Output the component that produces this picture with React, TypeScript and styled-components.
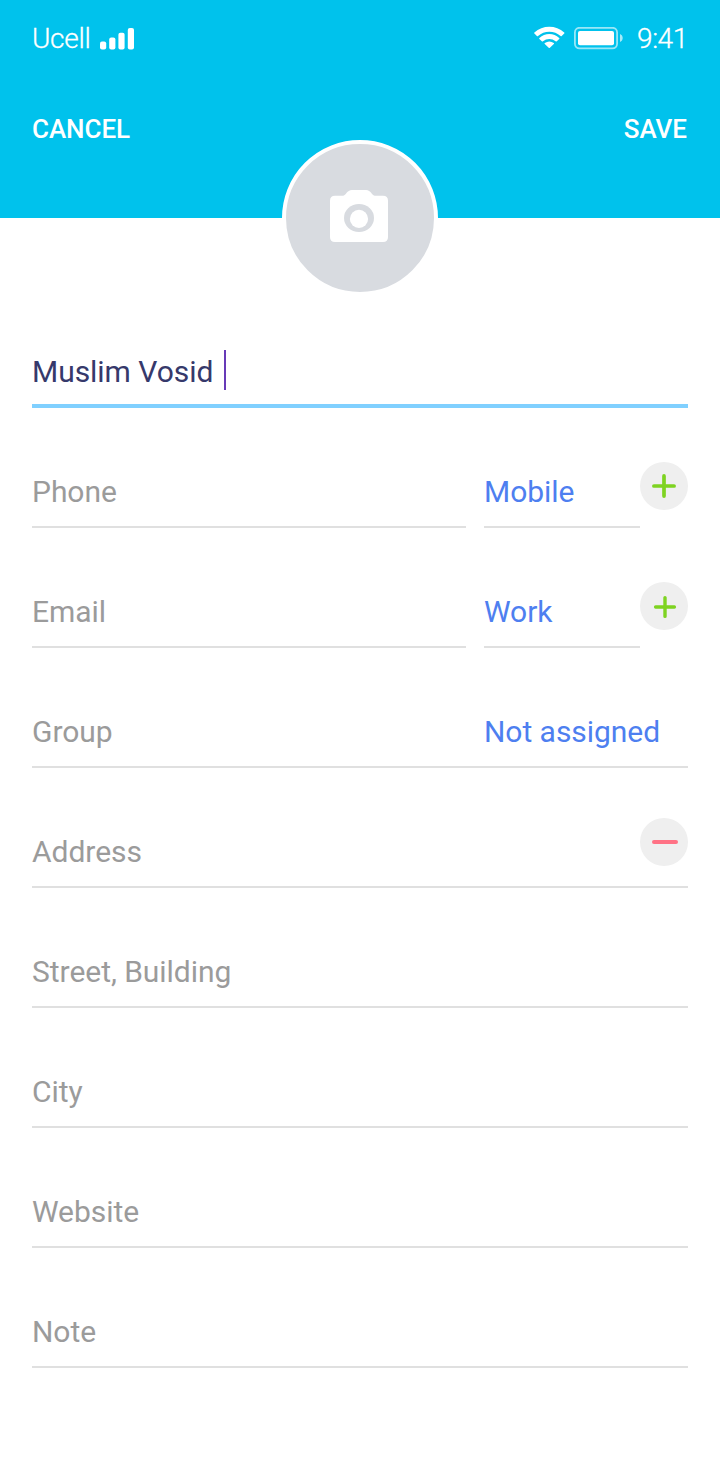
import React from "react";
import styled, { createGlobalStyle } from "styled-components";

const GlobalStyle = createGlobalStyle`
  * { box-sizing: border-box; }
  body { margin: 0; background: #fff; font-family: Roboto, "Liberation Sans", sans-serif; }
`;

const Screen = styled.main`
  width: 720px;
  min-height: 1480px;
  background: #fff;
`;

const Header = styled.header`
  height: 218px;
  background: #00c2ec;
  color: #fff;
`;

const StatusBar = styled.div`
  height: 76px;
  padding: 2px 33px 0 32px;
  display: flex;
  justify-content: space-between;
  align-items: center;
  font-size: 28px;
  font-weight: 300;
  line-height: 32px;
  -webkit-text-stroke: 0.3px #fff;
`;

const StatusGroup = styled.div`
  display: flex;
  align-items: center;
`;

const Carrier = styled.span`
  width: 68px;
  letter-spacing: -0.3px;
`;

const Clock = styled.span`
  width: 50px;
  margin-left: 14px;
  letter-spacing: -0.4px;
`;

const StatusIcon = styled.svg`
  display: block;
  flex: none;
`;

const WifiSlot = styled.span`
  margin-right: 9px;
  padding-bottom: 4px;
`;

const NavBar = styled.nav`
  height: 106px;
  padding: 0 33px 0 32px;
  display: flex;
  justify-content: space-between;
  align-items: center;
`;

const NavButton = styled.button`
  padding: 0;
  border: 0;
  background: none;
  color: inherit;
  font: 500 26px/30px Roboto, "Liberation Sans", sans-serif;
  letter-spacing: -0.05px;
`;

const Avatar = styled.button`
  position: relative;
  display: flex;
  align-items: center;
  justify-content: center;
  width: 156px;
  height: 156px;
  margin: -78px auto 0;
  padding: 0 2px 4px 0;
  border: 4px solid #fff;
  border-radius: 50%;
  background: #d8dbe0;
`;

const Form = styled.form`
  padding: 0 32px;
  display: flex;
  flex-direction: column;
  margin-top: -8px;
`;

const Row = styled.div`
  height: 120px;
  display: flex;
  align-items: flex-end;
`;

const Field = styled.div<{ $width?: number; $active?: boolean }>`
  ${(p) => (p.$width ? `width: ${p.$width}px;` : "flex: 1;")}
  height: 66px;
  display: flex;
  align-items: flex-start;
  padding-top: 12px;
  border-bottom: ${(p) => (p.$active ? "4px solid #80d0ff" : "2px solid #e0e0e0")};
  color: ${(p) => (p.$active ? "#36396b" : "#9b9b9b")};
  font-size: 30px;
  font-weight: 400;
  line-height: 36px;
  letter-spacing: -0.04px;
  white-space: nowrap;
`;

const Choice = styled(Field)`
  margin-left: 18px;
  color: #4e7ff0;
`;

const GroupValue = styled.span`
  width: 204px;
  margin-left: auto;
  color: #4e7ff0;
`;

const Caret = styled.span`
  width: 2px;
  height: 40px;
  margin: -4px 0 0 11px;
  background: #673ab7;
`;

const RoundButton = styled.button`
  width: 48px;
  height: 48px;
  padding: 0;
  border: 0;
  border-radius: 50%;
  background: #efefef;
  margin-bottom: 18px;
`;

const Glyph = styled.svg`
  display: block;
`;

const AddressButton = styled(RoundButton)`
  margin: -16px 0 0 auto;
`;

const SignalIcon = () => (
  <StatusIcon width="34" height="22" viewBox="0 0 34 22" fill="#fff">
    <rect x="0" y="13.4" width="6.2" height="8" rx="2" />
    <rect x="9.2" y="9.4" width="6.2" height="12" rx="2" />
    <rect x="18.4" y="4.8" width="6.2" height="16.6" rx="2" />
    <rect x="27.8" y="0" width="6.2" height="21.4" rx="2" />
  </StatusIcon>
);

const WifiIcon = () => (
  <StatusIcon width="31" height="22" viewBox="0 0 31 22" fill="#fff">
    <path d="M.4 6.4A22.2 22.2 0 0 1 30.2 6.4Q30.8 7 30.2 7.5L27.7 10Q27.2 10.4 26.6 10A16.8 16.8 0 0 0 4 10Q3.4 10.4 2.9 10L.4 7.5Q-.2 7 .4 6.4Z" />
    <path d="M5.4 11.9A14.8 14.8 0 0 1 25.2 11.9Q25.8 12.4 25.2 13L22.8 15.3Q22.2 15.8 21.6 15.3A9.6 9.6 0 0 0 9 15.3Q8.4 15.8 7.8 15.3L5.4 13Q4.8 12.4 5.4 11.9Z" />
    <path d="M10.8 17.1A7.4 7.4 0 0 1 19.8 17.1Q20.4 17.6 19.8 18.1L15.9 21.7Q15.3 22.1 14.7 21.7L10.8 18.1Q10.2 17.6 10.8 17.1Z" />
  </StatusIcon>
);

const BatteryIcon = () => (
  <StatusIcon width="49" height="24" viewBox="0 0 49 24">
    <rect x=".9" y=".8" width="42.2" height="20.6" rx="4.6" fill="none" stroke="#fff" strokeOpacity=".6" strokeWidth="1.8" />
    <rect x="4" y="4" width="36" height="14.2" rx="2" fill="#fff" />
    <path d="M46 7c1.7.7 2.7 2.1 2.7 4s-1 3.3-2.7 4Z" fill="#fff" fillOpacity=".65" />
  </StatusIcon>
);

const CameraIcon = () => (
  <Glyph width="58" height="52" viewBox="0 0 58 52">
    <path
      d="M5 5.7H13C16 5.7 16.8 0 22 0H36C41 0 41.8 5.7 45 5.7H53Q58 5.7 58 10.7V47Q58 52 53 52H5Q0 52 0 47V10.7Q0 5.7 5 5.7Z"
      fill="#fff"
    />
    <ellipse cx="29" cy="28" rx="15" ry="14" fill="#d8dbe0" />
    <circle cx="29" cy="28.9" r="9.1" fill="#fff" />
  </Glyph>
);

const PlusIcon = ({ small = false }: { small?: boolean }) => (
  <Glyph width="48" height="48" viewBox="0 0 48 48" stroke="#7ed321" strokeLinecap="round">
    <path
      d={small ? "M15.6 25H34.4M25 15.6V34.4" : "M13.9 24H34.1M24 13.9V34.1"}
      strokeWidth={small ? 3.4 : 3.7}
    />
  </Glyph>
);

const MinusIcon = () => (
  <Glyph width="48" height="48" viewBox="0 0 48 48">
    <rect x="12" y="22" width="26" height="4" rx="2" fill="#ff7285" />
  </Glyph>
);

export default function App() {
  return (
    <>
      <GlobalStyle />
      <Screen>
        <Header>
          <StatusBar>
            <StatusGroup>
              <Carrier>Ucell</Carrier>
              <SignalIcon />
            </StatusGroup>
            <StatusGroup>
              <WifiSlot>
                <WifiIcon />
              </WifiSlot>
              <BatteryIcon />
              <Clock>9:41</Clock>
            </StatusGroup>
          </StatusBar>
          <NavBar>
            <NavButton type="button">CANCEL</NavButton>
            <NavButton type="button">SAVE</NavButton>
          </NavBar>
        </Header>
        <Avatar type="button" aria-label="Add photo">
          <CameraIcon />
        </Avatar>
        <Form>
          <Row>
            <Field $active>
              Muslim Vosid
              <Caret />
            </Field>
          </Row>
          <Row>
            <Field $width={434}>Phone</Field>
            <Choice $width={156}>Mobile</Choice>
            <RoundButton type="button" aria-label="Add phone">
              <PlusIcon />
            </RoundButton>
          </Row>
          <Row>
            <Field $width={434}>Email</Field>
            <Choice $width={156}>Work</Choice>
            <RoundButton type="button" aria-label="Add email">
              <PlusIcon small />
            </RoundButton>
          </Row>
          <Row>
            <Field>
              Group
              <GroupValue>Not assigned</GroupValue>
            </Field>
          </Row>
          <Row>
            <Field>
              Address
              <AddressButton type="button" aria-label="Remove address">
                <MinusIcon />
              </AddressButton>
            </Field>
          </Row>
          {["Street, Building", "City", "Website", "Note"].map((label) => (
            <Row key={label}>
              <Field>{label}</Field>
            </Row>
          ))}
        </Form>
      </Screen>
    </>
  );
}
